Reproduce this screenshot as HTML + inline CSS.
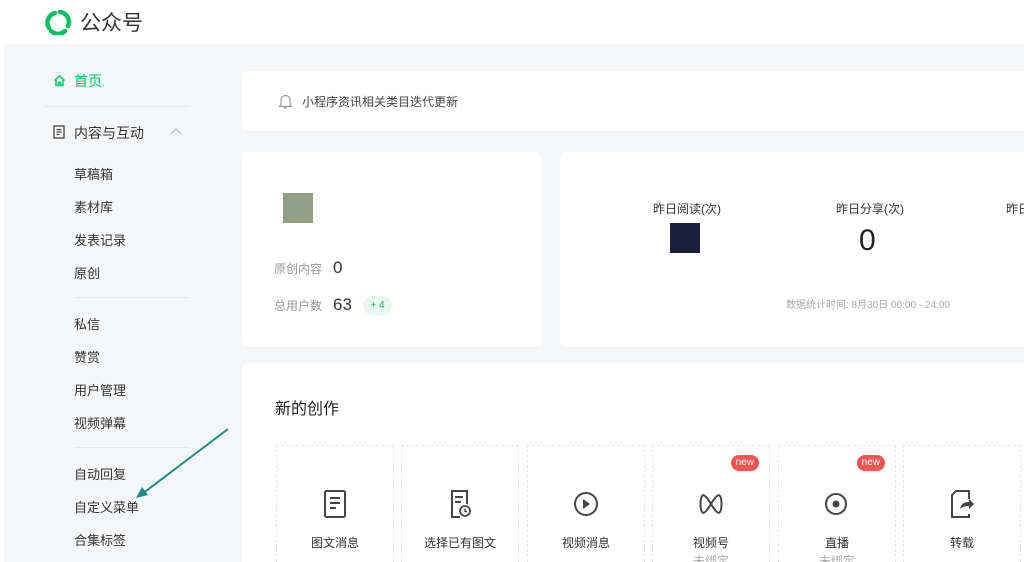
<!DOCTYPE html>
<html style="overflow:hidden;height:562px"><head><meta charset="utf-8"><style>
*{margin:0;padding:0;box-sizing:border-box}
body{width:1024px;height:562px;overflow:hidden;background:#f5f6f8;font-family:"Liberation Sans","Noto Sans CJK SC",sans-serif;position:relative;color:#333;white-space:nowrap}
.a{position:absolute}
.hdr{left:0;top:0;width:1024px;height:44px;background:#fff}
.strip{left:0;top:44px;width:4px;height:518px;background:#fff}
.nav{font-size:13px;color:#333}
.line{height:1px;background:#e7e8eb}
.card{background:#fff;border-radius:6px}
.item{width:118px;height:117px;border:1px dashed #e5e5e5;border-bottom:none;top:445px;overflow:hidden}
.item .t{position:absolute;top:88px;width:100%;text-align:center;font-size:12px;color:#333}
.item .s{position:absolute;top:106px;width:100%;text-align:center;font-size:12px;color:#aaa}
.item svg{position:absolute;left:45px;top:43px}
.new{position:absolute;top:9px;right:10px;background:#fa5151;color:#fff;font-size:10px;border-radius:8px;padding:1px 5px;line-height:14px}
</style></head><body>
<div class="a hdr"></div>
<div class="a strip"></div>
<svg class="a" style="left:43px;top:9px" width="30" height="26" viewBox="0 0 30 26"><g fill="none" stroke="#07c160" stroke-width="4.5" stroke-linecap="round"><path d="M6 19 A10 10 0 0 1 12 4"/><path d="M17 3 A10 10 0 0 1 25 17"/><path d="M22 22 A10 10 0 0 1 8 22"/></g></svg>
<div class="a" style="left:80px;top:7px;font-size:21px;color:#333">公众号</div>

<svg class="a" style="left:53px;top:74px" width="13" height="13" viewBox="0 0 13 13"><path d="M1.5 6.5 L6.5 1.8 L11.5 6.5 M3 5.5 V11.5 H10 V5.5 M5.5 11.5 V8.5 H7.5 V11.5" fill="none" stroke="#07c160" stroke-width="1.4"/></svg>
<div class="a" style="left:74px;top:71px;font-size:14px;color:#07c160">首页</div>
<div class="a line" style="left:44px;top:106px;width:146px"></div>
<svg class="a" style="left:53px;top:125px" width="12" height="14" viewBox="0 0 12 14"><rect x="1" y="1" width="10" height="12" fill="none" stroke="#444" stroke-width="1.3"/><path d="M3.5 4.5h5M3.5 7h5M3.5 9.5h3" stroke="#444" stroke-width="1.2"/></svg>
<div class="a" style="left:74px;top:123px;font-size:14px;color:#333">内容与互动</div>
<svg class="a" style="left:170px;top:127px" width="12" height="8"><path d="M1 7L6 2l5 5" fill="none" stroke="#bbb" stroke-width="1.2"/></svg>
<div class="a nav" style="left:74px;top:164px">草稿箱</div>
<div class="a nav" style="left:74px;top:197px">素材库</div>
<div class="a nav" style="left:74px;top:230px">发表记录</div>
<div class="a nav" style="left:74px;top:263px">原创</div>
<div class="a line" style="left:74px;top:297px;width:116px"></div>
<div class="a nav" style="left:74px;top:314px">私信</div>
<div class="a nav" style="left:74px;top:347px">赞赏</div>
<div class="a nav" style="left:74px;top:380px">用户管理</div>
<div class="a nav" style="left:74px;top:413px">视频弹幕</div>
<div class="a line" style="left:74px;top:447px;width:116px"></div>
<div class="a nav" style="left:74px;top:464px">自动回复</div>
<div class="a nav" style="left:74px;top:497px">自定义菜单</div>
<div class="a nav" style="left:74px;top:530px">合集标签</div>
<svg class="a" style="left:130px;top:424px" width="104" height="76"><path d="M98 5 L12 70" stroke="#1a8a86" stroke-width="2"/><path d="M6 74 L12 63 L18 71 Z" fill="#1a8a86"/></svg>

<div class="a card" style="left:242px;top:71px;width:800px;height:60px"></div>
<svg class="a" style="left:278px;top:93px" width="15" height="17" viewBox="0 0 15 17"><path d="M3 12V7a4.5 4.5 0 0 1 9 0v5l1.5 1.5h-12z M6 15h3" fill="none" stroke="#999" stroke-width="1.2"/></svg>
<div class="a" style="left:302px;top:93px;font-size:12px;color:#444">小程序资讯相关类目迭代更新</div>

<div class="a card" style="left:242px;top:152px;width:299px;height:195px"></div>
<div class="a" style="left:283px;top:193px;width:30px;height:30px;background:#949e87"></div>
<div class="a" style="left:274px;top:260px;font-size:12px;color:#999">原创内容</div>
<div class="a" style="left:333px;top:258px;font-size:17px;color:#333">0</div>
<div class="a" style="left:274px;top:297px;font-size:12px;color:#999">总用户数</div>
<div class="a" style="left:333px;top:295px;font-size:17px;color:#333">63</div>
<div class="a" style="left:363px;top:296px;width:29px;height:19px;border-radius:10px;background:#e9f7ef;color:#07c160;font-size:10px;text-align:center;line-height:19px">+ 4</div>

<div class="a card" style="left:560px;top:152px;width:480px;height:195px"></div>
<div class="a" style="left:653px;top:200px;font-size:12px;color:#333">昨日阅读(次)</div>
<div class="a" style="left:670px;top:223px;width:30px;height:30px;background:#1c1d3a"></div>
<div class="a" style="left:836px;top:200px;font-size:12px;color:#333">昨日分享(次)</div>
<div class="a" style="left:859px;top:224px;font-size:30px;color:#222">0</div>
<div class="a" style="left:1006px;top:200px;font-size:12px;color:#333">昨日</div>
<div class="a" style="left:786px;top:296px;font-size:10px;color:#aaa">数据统计时间: 8月30日 00:00 - 24:00</div>

<div class="a card" style="left:242px;top:363px;width:800px;height:199px;border-radius:6px 6px 0 0"></div>
<div class="a" style="left:275px;top:395px;font-size:16px;color:#222">新的创作</div>

<div class="a item" style="left:276px"><svg width="26" height="30" viewBox="0 0 26 30"><rect x="3" y="2" width="20" height="26" rx="1.5" fill="none" stroke="#444" stroke-width="2"/><path d="M8 9h10M8 14h10M8 19h6" stroke="#444" stroke-width="2"/></svg><div class="t">图文消息</div></div>
<div class="a item" style="left:401px"><svg width="26" height="30" viewBox="0 0 26 30"><path d="M13 28H5V2h15v13" fill="none" stroke="#444" stroke-width="2"/><path d="M8 8h8M8 13h6" stroke="#444" stroke-width="2"/><circle cx="18" cy="22" r="5" fill="#fff" stroke="#444" stroke-width="1.8"/><path d="M18 19.5v3h2" fill="none" stroke="#444" stroke-width="1.4"/></svg><div class="t">选择已有图文</div></div>
<div class="a item" style="left:527px"><svg width="28" height="30" viewBox="0 0 28 30"><circle cx="13" cy="15" r="11" fill="none" stroke="#444" stroke-width="2"/><path d="M10 10l7 5-7 5z" fill="#444"/></svg><div class="t">视频消息</div></div>
<div class="a item" style="left:652px"><span class="new">new</span><svg width="26" height="30" viewBox="0 0 26 30"><path d="M4 7c2-3 6 3 9 8 3 5 7 11 9 8 2-3 2-13 0-16-2-3-6 3-9 8-3 5-7 11-9 8-2-3-2-13 0-16z" fill="none" stroke="#444" stroke-width="2"/></svg><div class="t">视频号</div><div class="s">未绑定</div></div>
<div class="a item" style="left:778px"><span class="new">new</span><svg width="26" height="30" viewBox="0 0 26 30"><circle cx="12" cy="15" r="10" fill="none" stroke="#444" stroke-width="2"/><circle cx="12" cy="15" r="3.5" fill="#444"/></svg><div class="t">直播</div><div class="s">未绑定</div></div>
<div class="a item" style="left:903px"><svg width="26" height="30" viewBox="0 0 26 30"><path d="M20 10V2H7L3 6v22h17v-3" fill="none" stroke="#444" stroke-width="2"/><path d="M11 20c1-5 4-7 9-7v-3l5 5-5 5v-3c-4 0-7 1-9 3z" fill="#444"/></svg><div class="t">转载</div></div>
</body></html>
